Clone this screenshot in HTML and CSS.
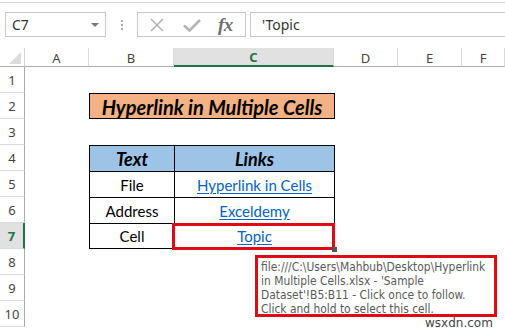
FILE: index.html
```html
<!DOCTYPE html>
<html>
<head>
<meta charset="utf-8">
<link rel="stylesheet" href="styles.css">
</head>
<body>
<div class="app">
  <div class="topline"></div>
  <div class="fbar">
    <div class="namebox"><span class="nb-text">C7</span><span class="nb-arrow"></span></div>
    <div class="dots"><i></i><i></i><i></i></div>
    <div class="fbtns">
      <svg class="ic-x" width="14" height="14" viewBox="0 0 14 14"><path d="M1 1L13 13M13 1L1 13" stroke="#b4b4b4" stroke-width="1.6" fill="none"/></svg>
      <svg class="ic-ok" width="18" height="14" viewBox="0 0 18 14"><path d="M1 7.5L6.5 12.5L17 2" stroke="#b4b4b4" stroke-width="2.6" fill="none"/></svg>
      <span class="fx">fx</span>
    </div>
    <div class="finput">'Topic</div>
  </div>
  <div class="sheet">
    <div class="corner"><span class="tri"></span></div>
    <div class="ch">A</div>
    <div class="ch">B</div>
    <div class="ch sel">C</div>
    <div class="ch">D</div>
    <div class="ch">E</div>
    <div class="ch">F</div>

    <div class="rh r1">1</div>
    <div class="rh r2">2</div>
    <div class="rh r3">3</div>
    <div class="rh r4">4</div>
    <div class="rh r5">5</div>
    <div class="rh r6">6</div>
    <div class="rh r7 sel">7</div>
    <div class="rh r8">8</div>
    <div class="rh r9">9</div>
    <div class="rh r10">10</div>

    <div class="title">Hyperlink in Multiple Cells</div>

    <div class="tc th c-b r-4">Text</div>
    <div class="tc th c-c r-4">Links</div>
    <div class="tc c-b r-5">File</div>
    <div class="tc c-c r-5"><span class="lnk">Hyperlink in Cells </span></div>
    <div class="tc c-b r-6">Address</div>
    <div class="tc c-c r-6"><span class="lnk">Exceldemy</span></div>
    <div class="tc c-b r-7">Cell</div>
    <div class="tc c-c r-7"><span class="lnk">Topic</span></div>
  </div>
  <div class="redbox"><span class="handle"></span></div>
  <div class="tip">file:///C:\Users\Mahbub\Desktop\Hyperlink<br>in Multiple Cells.xlsx - 'Sample<br>Dataset'!B5:B11 - Click once to follow.<br>Click and hold to select this cell.</div>
  <div class="wm">wsxdn.com</div>
</div>
</body>
</html>
```
FILE: styles.css
```css
html, body { margin: 0; padding: 0; background: #fff; }
body { width: 505px; height: 330px; overflow: hidden; font-family: "Noto Sans", "Open Sans", sans-serif; }
.app { position: relative; width: 505px; height: 330px; }
.topline { height: 2px; border-bottom: 1px solid #d6d6d6; }
.fbar { display: flex; align-items: stretch; height: 25px; margin-top: 9px; margin-bottom: 11px; }
.namebox { margin-left: 5px; border: 1px solid #c6c6c6; display: flex; align-items: center; justify-content: space-between; box-sizing: border-box; width: 101px; padding: 0 6px 0 6px; }
.nb-text { font-size: 14px; color: #333; }
.nb-arrow { width: 0; height: 0; border-left: 4px solid transparent; border-right: 4px solid transparent; border-top: 4px solid #777; }
.dots { width: 31px; display: flex; flex-direction: column; align-items: center; justify-content: center; gap: 2px; }
.dots i { display: block; width: 2px; height: 2px; background: #aaa; }
.fbtns { width: 109px; box-sizing: border-box; border: 1px solid #c6c6c6; display: flex; align-items: center; padding-left: 12px; }
.ic-x { margin-right: 19px; }
.ic-ok { margin-right: 17px; }
.fx { font-family: "Liberation Serif", serif; font-style: italic; font-weight: bold; font-size: 19px; color: #707070; letter-spacing: -0.5px; }
.finput { flex: 1; margin-left: 4px; border: 1px solid #c6c6c6; border-right: none; box-sizing: border-box; font-size: 14px; color: #333; padding-left: 11px; display: flex; align-items: center; }

.sheet { display: grid; grid-template-columns: 25px 64px 85px 160px 64px 64px 43px; grid-template-rows: 19px repeat(10, 26px); }
.corner { grid-column: 1; grid-row: 1; position: relative; border-bottom: 1px solid #ababab; border-right: 1px solid #d4d4d4; box-sizing: border-box; }
.tri { position: absolute; right: 3px; bottom: 2px; width: 0; height: 0; border-left: 12px solid transparent; border-bottom: 12px solid #dcdcdc; }
.ch { box-sizing: border-box; border-bottom: 1px solid #ababab; border-right: 1px solid #d9d9d9; display: flex; align-items: center; justify-content: center; font-size: 13px; color: #444; padding-top: 1px; }
.ch.sel { background: #e1e1e1; border-bottom: 2px solid #217346; color: #217346; font-weight: bold; }
.rh { grid-column: 1; box-sizing: border-box; border-right: 1px solid #ababab; border-bottom: 1px solid #dadada; display: flex; align-items: center; justify-content: center; font-size: 13px; color: #444; }
.rh.sel { background: #e1e1e1; color: #217346; font-weight: bold; border-right: 2px solid #217346; }
.r1 { grid-row: 2; } .r2 { grid-row: 3; } .r3 { grid-row: 4; } .r4 { grid-row: 5; } .r5 { grid-row: 6; }
.r6 { grid-row: 7; } .r7 { grid-row: 8; } .r8 { grid-row: 9; } .r9 { grid-row: 10; } .r10 { grid-row: 11; }

.title { grid-column: 3 / 5; grid-row: 3; background: #f4b183; border: 1px solid #000; box-sizing: border-box; margin-right: -1px; display: flex; align-items: center; justify-content: center; font-family: "Lato", sans-serif; font-weight: bold; font-style: italic; font-size: 20px; color: #000; padding-top: 1px; }
.tc { box-sizing: border-box; border-left: 1px solid #000; border-top: 1px solid #000; display: flex; align-items: center; justify-content: center; font-family: "Lato", sans-serif; font-size: 15px; color: #000; }
.c-c { border-right: 1px solid #000; margin-right: -1px; }
.r-7 { border-bottom: 1px solid #000; }
.th { background: #9dc3e6; font-weight: bold; font-style: italic; font-size: 18px; }
.c-b { grid-column: 3; } .c-c { grid-column: 4; }
.r-4 { grid-row: 5; } .r-5 { grid-row: 6; } .r-6 { grid-row: 7; } .r-7 { grid-row: 8; }
.lnk { color: #0563c1; text-decoration: underline; text-underline-offset: 2px; }

.redbox { position: absolute; left: 172px; top: 223px; width: 163px; height: 27px; box-sizing: border-box; border: 3px solid #e00a14; }
.handle { position: absolute; right: -5px; bottom: -5px; width: 5px; height: 5px; background: #555; }
.tip { position: absolute; left: 255px; top: 255px; width: 242px; height: 62px; box-sizing: border-box; border: 3px solid #e00a14; background: #fff; padding: 2px 0 0 3px; font-family: "DejaVu Sans Condensed", "DejaVu Sans", sans-serif; font-size: 11.9px; line-height: 14px; color: #5a5a5a; white-space: nowrap; overflow: hidden; }
.wm { position: absolute; left: 425px; top: 316px; font-family: "DejaVu Sans", sans-serif; font-size: 12px; color: #444; }
```
